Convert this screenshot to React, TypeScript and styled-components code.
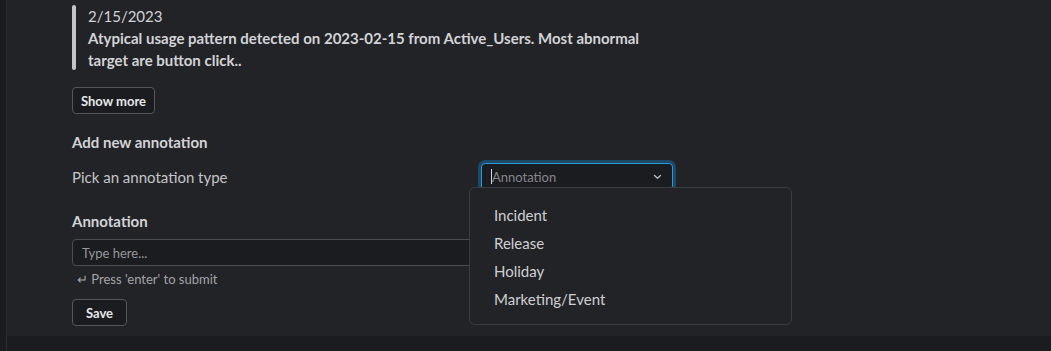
import React from "react"
import styled, { createGlobalStyle } from "styled-components"

const GlobalStyle = createGlobalStyle`
  html, body {
    margin: 0;
    padding: 0;
    background: #1b1c1f;
    font-family: Lato, "Open Sans", "Liberation Sans", sans-serif;
    color: #cfd0d3;
  }
  * { box-sizing: border-box; }
`

const Shell = styled.div`
  display: flex;
  width: 1051px;
  height: 351px;
  overflow: hidden;
  background: #1b1c1f;
`

const Rail = styled.div`
  width: 7px;
  flex: none;
  border-right: 1px solid #2b2c30;
`

const Panel = styled.main`
  flex: 1;
  height: 336px;
  background: #222327;
  padding: 5px 0 0 65px;
`

const Form = styled.div`
  width: 601px;
  display: flex;
  flex-direction: column;
  align-items: flex-start;
`

const Quote = styled.blockquote`
  margin: 0;
  padding-left: 16px;
  position: relative;
  font-size: 15px;
  line-height: 22px;
  &::before {
    content: "";
    position: absolute;
    left: 0;
    top: 0;
    bottom: 1px;
    width: 4px;
    border-radius: 2px;
    background: #c4c5c8;
  }
`

const QuoteDate = styled.div`
  color: #d2d3d6;
`

const QuoteText = styled.div`
  font-weight: 700;
  color: #d2d3d6;
  width: 580px;
`

const Button = styled.button<{ $top: number; $width?: number }>`
  margin-top: ${p => p.$top}px;
  height: 27px;
  ${p => (p.$width ? `width: ${p.$width}px;` : "")}
  padding: 0 8px;
  border: 1px solid #55565b;
  border-radius: 4px;
  background: #1b1c1f;
  color: #e6e7e9;
  font-family: inherit;
  font-size: 13px;
  font-weight: 700;
`

const Heading = styled.div<{ $top: number }>`
  margin-top: ${p => p.$top}px;
  font-size: 15px;
  line-height: 22px;
  font-weight: 700;
  color: #d2d3d6;
`

const TypeRow = styled.div`
  margin-top: 10px;
  width: 100%;
  display: flex;
  align-items: center;
  justify-content: space-between;
  font-size: 15px;
  color: #c4c5c8;
`

const SelectWrap = styled.div`
  position: relative;
  width: 192px;
`

const Select = styled.div`
  height: 27px;
  display: flex;
  align-items: center;
  padding: 0 10px 0 9px;
  border: 1px solid #2a9ad6;
  border-radius: 4px;
  box-shadow: 0 0 0 3px #1d4866;
  background: #1b1c1f;
  font-size: 13px;
  color: #86878c;
`

const Caret = styled.span`
  width: 1px;
  height: 15px;
  background: #d8d8d8;
`

const Placeholder = styled.span`
  flex: 1;
`

const Menu = styled.ul`
  position: absolute;
  left: -12px;
  top: 24px;
  width: 323px;
  height: 138px;
  margin: 0;
  padding: 13px 0 0 24px;
  list-style: none;
  background: #222327;
  border: 1px solid #3b3c41;
  border-radius: 6px;
  z-index: 2;
`

const MenuItem = styled.li`
  height: 28px;
  line-height: 28px;
  font-size: 15px;
  color: #cfd0d3;
`

const TextInput = styled.div`
  margin-top: 7px;
  width: 100%;
  height: 27px;
  display: flex;
  align-items: center;
  padding: 0 9px;
  border: 1px solid #4b4c51;
  border-radius: 4px;
  background: #1b1c1f;
  font-size: 13px;
  color: #96979b;
`

const Hint = styled.div`
  margin-top: 5px;
  padding-left: 5px;
  font-size: 13px;
  line-height: 17px;
  color: #a3a4a8;
`

const Chevron = () => (
  <svg width="9" height="6" viewBox="0 0 9 6" fill="none">
    <path d="M1.5 1.5 L4.5 4.2 L7.5 1.5" stroke="#b8b9bc" strokeWidth="1.4" strokeLinecap="round" strokeLinejoin="round" />
  </svg>
)

const types = ["Incident", "Release", "Holiday", "Marketing/Event"]

export default function App() {
  return (
    <>
      <GlobalStyle />
      <Shell>
        <Rail />
        <Panel>
          <Form>
            <Quote>
              <QuoteDate>2/15/2023</QuoteDate>
              <QuoteText>
                Atypical usage pattern detected on 2023-02-15 from Active_Users. Most abnormal target are button click..
              </QuoteText>
            </Quote>
            <Button $top={16}>Show more</Button>
            <Heading $top={17}>Add new annotation</Heading>
            <TypeRow>
              <span>Pick an annotation type</span>
              <SelectWrap>
                <Select>
                  <Caret />
                  <Placeholder>Annotation</Placeholder>
                  <Chevron />
                </Select>
                <Menu>
                  {types.map(t => (
                    <MenuItem key={t}>{t}</MenuItem>
                  ))}
                </Menu>
              </SelectWrap>
            </TypeRow>
            <Heading $top={20}>Annotation</Heading>
            <TextInput>Type here...</TextInput>
            <Hint>↵ Press 'enter' to submit</Hint>
            <Button $top={11} $width={55}>Save</Button>
          </Form>
        </Panel>
      </Shell>
    </>
  )
}
